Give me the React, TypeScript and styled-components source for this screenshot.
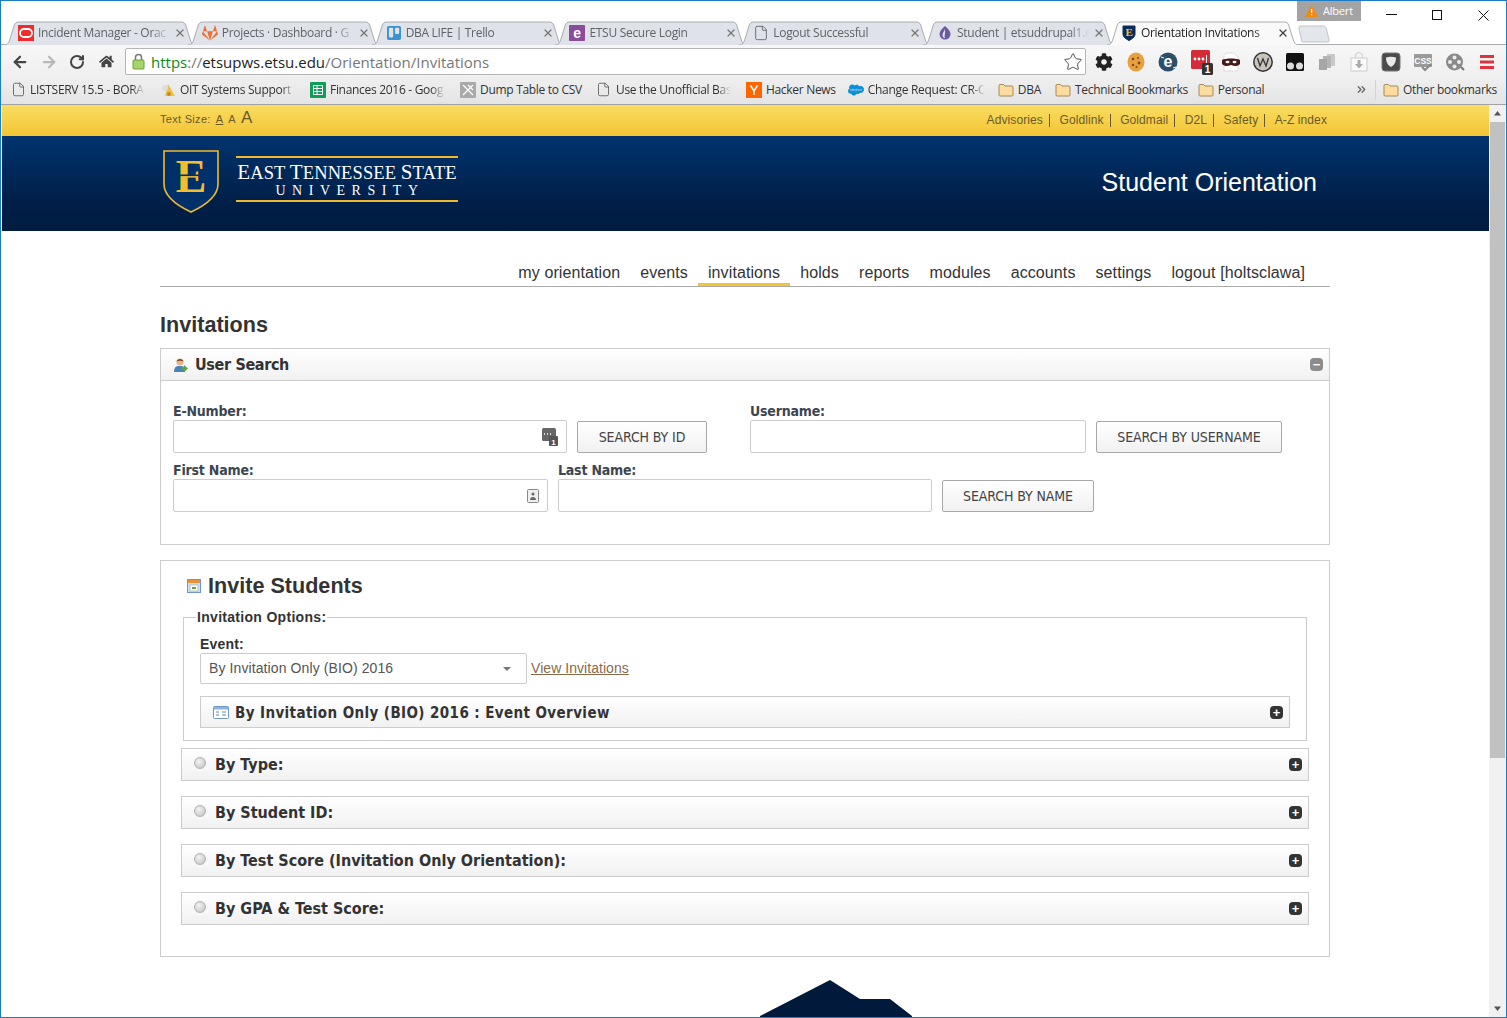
import React from "react";
import styled, { createGlobalStyle } from "styled-components";
import { ArrowLeft, ArrowRight, RotateCw, Star, X, File, ChevronsRight } from "lucide-react";
import { FaCog, FaGitlab, FaHome, FaSalesforce, FaTrello } from "react-icons/fa";

const Global = createGlobalStyle`
  html, body { margin: 0; padding: 0; width: 1507px; height: 1018px; overflow: hidden; background: #fff; }
  * { box-sizing: border-box; }
`;

const UI = `"Open Sans", "Noto Sans", sans-serif`;
const TAHOMA = `"DejaVu Sans Condensed", "DejaVu Sans", sans-serif`;
const ARIAL = `"Liberation Sans", Arial, sans-serif`;

const Window = styled.div`
  width: 1507px;
  height: 1018px;
  display: flex;
  flex-direction: column;
  overflow: hidden;
  background: #fff;
  border: 1px solid #1c7cc4;
`;

const TitleBar = styled.div`
  height: 43px;
  display: flex;
  justify-content: space-between;
  flex: none;
`;

const TabStrip = styled.div`
  display: flex;
  align-items: flex-end;
  padding-left: 3px;
  height: 44px;
  position: relative;
  z-index: 2;
`;

const TabWrap = styled.div<{ $active?: boolean }>`
  position: relative;
  width: 192px;
  height: 24px;
  margin-right: -8.2px;
  display: flex;
  align-items: center;
  padding: 0 3px 0 14px;
  font: 12px/16px ${UI};
  letter-spacing: -0.3px;
  color: ${(p) => (p.$active ? "#222" : "#5f6368")};
  z-index: ${(p) => (p.$active ? 3 : 1)};
`;

const TabShape = styled.svg`
  position: absolute;
  left: 0;
  top: 0;
`;

const TabIcon = styled.span`
  position: relative;
  width: 16px;
  height: 16px;
  display: flex;
  flex: none;
  align-items: center;
  justify-content: center;
  margin-right: 4px;
`;

const TabTitle = styled.span`
  position: relative;
  flex: 1;
  white-space: nowrap;
  overflow: hidden;
  mask-image: linear-gradient(to right, #000 85%, transparent 100%);
`;

const TabClose = styled.span<{ $active?: boolean }>`
  position: relative;
  display: flex;
  margin: 0 7px 0 4px;
  color: ${(p) => (p.$active ? "#444" : "#777")};
`;

const WinSide = styled.div`
  display: flex;
  flex-direction: column;
  width: 209px;
  margin-left: -2px;
`;

const WinTop = styled.div`
  display: flex;
  height: 20px;
`;

const ProfileBadge = styled.div`
  width: 65px;
  height: 20px;
  background: #a3a3a3;
  color: #fff;
  font: 11px/20px ${UI};
  letter-spacing: -0.2px;
  display: flex;
  align-items: center;
  gap: 5px;
  padding-left: 8px;
`;

const WinButtons = styled.div`
  display: flex;
  color: #111;
  margin-left: 7px;
`;

const WinButton = styled.span`
  width: 46px;
  height: 28px;
  display: flex;
  align-items: center;
  justify-content: center;
`;

const NewTab = styled.svg`
  display: block;
  margin-top: 4px;
  margin-left: 1px;
`;

const Toolbar = styled.div`
  height: 34px;
  flex: none;
  display: flex;
  align-items: center;
  padding-left: 10px;
  background: linear-gradient(#f7f7f7, #efefef);
  border-top: 1px solid #a9abae;
`;

const NavIcon = styled.span<{ $faded?: boolean; $inset?: number }>`
  width: 29px;
  display: flex;
  justify-content: flex-start;
  padding-left: ${(p) => p.$inset ?? 0}px;
  color: ${(p) => (p.$faded ? "#b8b8b8" : "#444")};
`;

const Omnibox = styled.div`
  width: 961px;
  height: 27px;
  margin-left: -2px;
  display: flex;
  align-items: center;
  background: #fff;
  border: 1px solid #b5b5b5;
  border-radius: 2px;
  padding: 0 2px 0 6px;
  font: 15px/20px ${UI};
`;

const Lock = styled.svg`
  margin-right: 6px;
  flex: none;
`;

const UrlScheme = styled.span`
  color: #0b8a1e;
`;
const UrlSep = styled.span`
  color: #777;
`;
const UrlHost = styled.span`
  color: #222;
`;
const UrlPath = styled.span`
  color: #777;
  flex: 1;
`;

const Extensions = styled.div`
  display: flex;
  align-items: center;
  margin-left: 2px;
`;

const Ext = styled.span<{ $w: number }>`
  width: ${(p) => p.$w}px;
  height: 24px;
  flex: none;
  display: flex;
  align-items: center;
  justify-content: center;
  color: #222;
`;

const Bookmarks = styled.div`
  height: 27px;
  flex: none;
  display: flex;
  align-items: center;
  padding: 0 9px 3px 9px;
  background: linear-gradient(#efefef, #e4e4e4);
  border-bottom: 1px solid #a3a3a3;
  font: 12px/16px ${UI};
  letter-spacing: -0.3px;
  color: #333;
`;

const Bookmark = styled.div<{ $gap?: number }>`
  display: flex;
  align-items: center;
  flex: none;
  margin-right: ${(p) => p.$gap ?? 13}px;
`;

const BmIcon = styled.span`
  width: 16px;
  height: 16px;
  margin-right: 4px;
  display: flex;
  align-items: center;
  justify-content: center;
  color: #555;
`;

const BmLabel = styled.span<{ $w?: number; $fade?: boolean }>`
  white-space: nowrap;
  ${(p) => (p.$w ? `width: ${p.$w}px;` : "")}
  ${(p) => (p.$fade ? "mask-image: linear-gradient(to right, #000 88%, transparent 100%);" : "")}
`;

const BmRight = styled.div`
  margin-left: auto;
  display: flex;
  align-items: center;
`;

const BmMore = styled.span`
  display: flex;
  color: #666;
  padding-right: 7px;
  margin-right: 7px;
  border-right: 1px solid #d4d4d4;
  height: 20px;
  align-items: center;
`;

const Viewport = styled.div`
  flex: 1;
  display: flex;
  min-height: 0;
  padding-left: 1px;
`;

const Main = styled.div`
  width: 1487px;
  overflow: hidden;
  flex: none;
`;

const Scrollbar = styled.div`
  width: 17px;
  flex: none;
  background: #f1f1f1;
  display: flex;
  flex-direction: column;
  align-items: center;
`;

const ScrollArrow = styled.svg`
  display: block;
  flex: none;
  margin: 5px 0;
`;

const ScrollThumb = styled.div`
  width: 15px;
  height: 636px;
  background: #c1c1c1;
  flex: none;
`;

const ScrollTrack = styled.div`
  flex: 1;
`;

const Wrap = styled.div`
  width: 1170px;
  margin-left: 158px;
`;

const UtilityBar = styled.div`
  height: 31px;
  background: linear-gradient(#f9dd62, #f3c433);
  color: #6a5a2a;
`;

const UtilityInner = styled(Wrap)`
  display: flex;
  justify-content: space-between;
  align-items: center;
  height: 31px;
  font: 11px/14px ${ARIAL};
`;

const TextSize = styled.div`
  display: flex;
  align-items: baseline;
  gap: 5px;
  margin-top: -5px;
  letter-spacing: 0.3px;
`;

const SizeLetter = styled.span<{ $size: number; $on?: boolean }>`
  font-size: ${(p) => p.$size}px;
  text-decoration: ${(p) => (p.$on ? "underline" : "none")};
`;

const UtilLinks = styled.div`
  display: flex;
  font-size: 12px;
  padding-right: 3px;
`;

const UtilLink = styled.span<{ $last?: boolean }>`
  padding: 0 ${(p) => (p.$last ? 0 : 6)}px 0 9.5px;
  border-right: ${(p) => (p.$last ? "none" : "1px solid #6a5a2a")};
  line-height: 13px;
  letter-spacing: 0.1px;
`;

const Banner = styled.div`
  height: 95px;
  background: linear-gradient(#00346f, #001f48 70%, #001c3f);
`;

const BannerInner = styled(Wrap)`
  display: flex;
  justify-content: space-between;
  align-items: center;
  height: 95px;
`;

const Logo = styled.div`
  display: flex;
  align-items: center;
  margin: 0 0 5px 1px;
`;

const Wordmark = styled.div`
  margin: 0 0 4px 15px;
  width: 222px;
  height: 46px;
  border-top: 2px solid #f0b92d;
  border-bottom: 2px solid #f0b92d;
  color: #fff;
  font-family: "Liberation Serif", serif;
  text-align: center;
`;

const WordTop = styled.div`
  font-size: 18.5px;
  line-height: 24px;
  margin-top: 2px;
  white-space: nowrap;
  letter-spacing: 0.1px;
`;

const WordCap = styled.span`
  font-size: 21px;
`;

const WordBottom = styled.div`
  font-size: 14px;
  line-height: 12px;
  letter-spacing: 6.5px;
  padding-left: 6px;
`;

const SiteTitle = styled.div`
  color: #fff;
  font: 25px/30px ${ARIAL};
  margin: 0 13px 3px 0;
`;

const Nav = styled.nav`
  height: 56px;
  border-bottom: 1px solid #aaa;
  display: flex;
  justify-content: flex-end;
  align-items: flex-end;
  padding-right: 15px;
`;

const NavItem = styled.a<{ $active?: boolean }>`
  font: 16px/18px ${ARIAL};
  letter-spacing: 0.1px;
  color: #333;
  padding: 3px 10px 1px;
  height: 25px;
  border-bottom: 3px solid ${(p) => (p.$active ? "#f3c433" : "transparent")};
  white-space: nowrap;
`;

const PageTitle = styled.h1`
  font: bold 21.6px/26px ${ARIAL};
  color: #333;
  margin: 25px 0 10px;
`;

const Panel = styled.section`
  width: 1170px;
  border: 1px solid #ccc;
  background: #fff;
`;

const PanelHead = styled.div`
  height: 32px;
  display: flex;
  align-items: center;
  padding: 0 6px 0 12px;
  background: linear-gradient(#fff, #f1f1f1);
  border-bottom: 1px solid #ccc;
`;

const HeadTitle = styled.h2`
  flex: 1;
  margin: 0 0 0 6px;
  padding-top: 1px;
  font: bold 16px/20px ${TAHOMA};
  color: #333;
  letter-spacing: -0.35px;
  white-space: nowrap;
`;

const SearchBody = styled.div`
  height: 163px;
  padding: 13px 12px 0;
`;

const FormRow = styled.div`
  display: flex;
  align-items: flex-end;
  gap: 10px;
  height: 59px;
`;

const Field = styled.div<{ $w: number; $skip?: number }>`
  width: ${(p) => p.$w}px;
  margin-left: ${(p) => p.$skip ?? 0}px;
  flex: none;
`;

const Label = styled.label`
  display: block;
  font: bold 14px/17px ${TAHOMA};
  letter-spacing: -0.2px;
  color: #3d4650;
`;

const InputBox = styled.div`
  height: 33px;
  display: flex;
  align-items: center;
  justify-content: flex-end;
  padding-right: 8px;
  border: 1px solid #ccc;
  border-radius: 2px;
  background: #fff;
`;

const Button = styled.button<{ $w: number }>`
  width: ${(p) => p.$w}px;
  height: 32px;
  flex: none;
  padding: 0;
  border: 1px solid #a8a8a8;
  border-radius: 2px;
  background: linear-gradient(#fff, #f1f1f1);
  font: 14px/18px ${TAHOMA};
  color: #444;
  letter-spacing: -0.1px;
`;

const InvitePanel = styled(Panel)`
  margin-top: 15px;
  height: 397px;
  padding: 0 20px;
`;

const InviteHead = styled.div`
  display: flex;
  align-items: center;
  height: 48px;
  padding: 1px 0 0 6px;
`;

const InviteTitle = styled.h2`
  margin: 0 0 0 7px;
  font: bold 21.6px/28px ${ARIAL};
  color: #333;
`;

const Options = styled.fieldset`
  margin: 0 2px;
  padding: 0 16px 11px;
  height: 132px;
  border: 1px solid #ccc;
`;

const OptionsLegend = styled.legend`
  padding: 0 1px;
  margin-left: -4px;
  font: bold 14px/16px ${ARIAL};
  letter-spacing: 0.3px;
  color: #333;
`;

const EventLabel = styled.label`
  display: block;
  margin-top: 10px;
  font: bold 14px/18px ${ARIAL};
  letter-spacing: 0.2px;
  color: #333;
`;

const EventRow = styled.div`
  display: flex;
  align-items: center;
  height: 31px;
  margin-bottom: 12px;
`;

const Select = styled.div`
  width: 327px;
  height: 31px;
  display: flex;
  align-items: center;
  justify-content: space-between;
  padding: 0 15px 2px 8px;
  border: 1px solid #ccc;
  border-radius: 2px;
  font: 14px/18px ${ARIAL};
  letter-spacing: 0.1px;
  color: #555;
`;

const Caret = styled.span`
  width: 0;
  height: 0;
  margin-top: 2px;
  border-left: 4px solid transparent;
  border-right: 4px solid transparent;
  border-top: 4px solid #777;
`;

const ViewLink = styled.a`
  margin: -2px 0 0 4px;
  font: 14px/18px ${ARIAL};
  letter-spacing: 0.05px;
  color: #8a6a4a;
  text-decoration: underline;
`;

const Bar = styled.div<{ $nested?: boolean }>`
  height: ${(p) => (p.$nested ? 32 : 33)}px;
  display: flex;
  align-items: center;
  padding: 0 6px 0 12px;
  border: 1px solid #ccc;
  background: linear-gradient(#fff, #f1f1f1);
  margin: ${(p) => (p.$nested ? "0" : "0 0 15px")};
`;

const BarList = styled.div`
  margin-top: 7px;
`;

const BarTitle = styled.span<{ $wide?: boolean }>`
  flex: 1;
  margin-left: ${(p) => (p.$wide ? 6 : 9)}px;
  padding-top: 1px;
  font: bold ${(p) => (p.$wide ? 15 : 16)}px/20px ${TAHOMA};
  letter-spacing: ${(p) => (p.$wide ? "0.4px" : "0")};
  color: #333;
  white-space: nowrap;
`;

const Dot = styled.span`
  width: 12px;
  height: 12px;
  border-radius: 50%;
  flex: none;
  background: radial-gradient(circle at 40% 35%, #f2f2f2, #bdbdbd);
  border: 1px solid #b3b3b3;
  margin: -3px 0 0 0;
`;

const RoundKey = styled.span<{ $muted?: boolean }>`
  width: 13px;
  height: 13px;
  border-radius: 4px;
  background: ${(p) => (p.$muted ? "#8c8c8c" : "#333")};
  flex: none;
  display: flex;
  align-items: center;
  justify-content: center;
  color: #fff;
  font: bold 13px/13px ${ARIAL};
`;

const Footer = styled.svg`
  display: block;
  margin: 22px 0 0 600px;
`;

// ---- little drawings

const FileIcon = ({ size = 15 }: { size?: number }) => <File size={size} strokeWidth={1.3} />;

const Folder = () => (
  <svg width="16" height="14" viewBox="0 0 16 14">
    <path d="M1 2.5A1 1 0 0 1 2 1.5h3.5l1.5 1.5h7a1 1 0 0 1 1 1v8a1 1 0 0 1-1 1H2a1 1 0 0 1-1-1z" fill="#fbdc9e" stroke="#a68a5a" />
  </svg>
);

const Shield = ({ size = 16 }: { size?: number }) => (
  <svg width={size} height={size} viewBox="0 0 16 16">
    <path d="M2 1h12v8c0 3-3 5-6 6.500C5 14 2 12 2 9z" fill="#0a2a58" stroke="#0a2a58" />
    <text x="8" y="11" textAnchor="middle" fontFamily="Liberation Serif" fontWeight="700" fontSize="11" fill="#f3c433">E</text>
  </svg>
);

const tabs: { title: string; icon: React.ReactNode; active?: boolean }[] = [
  {
    title: "Incident Manager - Orac",
    icon: (
      <svg width="16" height="16" viewBox="0 0 16 16">
        <rect width="16" height="16" fill="#f02b2b" />
        <rect x="2" y="4" width="12" height="8" rx="4" fill="none" stroke="#fff" strokeWidth="1.8" />
      </svg>
    ),
  },
  { title: "Projects · Dashboard · G", icon: <FaGitlab size={16} color="#e8703a" /> },
  {
    title: "DBA LIFE | Trello",
    icon: <FaTrello size={16} color="#3a93d0" />,
  },
  {
    title: "ETSU Secure Login",
    icon: (
      <svg width="16" height="16" viewBox="0 0 16 16">
        <rect width="16" height="16" rx="1" fill="#8a4b9b" />
        <text x="8" y="13" textAnchor="middle" fontFamily="Liberation Sans" fontWeight="700" fontSize="14" fill="#fff">e</text>
      </svg>
    ),
  },
  { title: "Logout Successful", icon: <FileIcon size={16} /> },
  {
    title: "Student | etsuddrupal1.e",
    icon: (
      <svg width="16" height="16" viewBox="0 0 16 16">
        <path d="M8 1c3 3 5.500 5 5.500 8A5.500 5.500 0 0 1 2.500 9C2.500 6 5 4 8 1z" fill="#6b5a9e" />
        <path d="M8 4c-1 3-2.500 3.500-2.500 6S7 13 8 13c-1-2 .5-4 0-9z" fill="#e6e3f0" />
      </svg>
    ),
  },
  { title: "Orientation Invitations", icon: <Shield />, active: true },
];

const Tab = ({ title, icon, active }: { title: string; icon: React.ReactNode; active?: boolean }) => (
  <TabWrap $active={active}>
    <TabShape width="192" height="24" viewBox="0 0 192 24">
      <path
        d="M0 24C4 24 5 21 6 18L10 5C11 2 12 1 15 1L177 1C180 1 181 2 182 5L186 18C187 21 188 24 192 24"
        fill={active ? "#f9f9f9" : "#dfe2e8"}
        stroke="#a9abae"
      />
    </TabShape>
    <TabIcon>{icon}</TabIcon>
    <TabTitle>{title}</TabTitle>
    <TabClose $active={active}>
      <X size={12} strokeWidth={2.6} />
    </TabClose>
  </TabWrap>
);

const Cookie = () => (
  <svg width="18" height="20" viewBox="0 0 18 20">
    <ellipse cx="9" cy="10" rx="8.500" ry="9.500" fill="#e9a03f" />
    <circle cx="6" cy="7" r="1.300" fill="#7a4a1a" />
    <circle cx="11" cy="6" r="1" fill="#7a4a1a" />
    <circle cx="12" cy="11" r="1.400" fill="#7a4a1a" />
    <circle cx="6" cy="13" r="1.200" fill="#7a4a1a" />
    <circle cx="9.500" cy="15" r="1" fill="#7a4a1a" />
  </svg>
);

const ECircle = () => (
  <svg width="20" height="20" viewBox="0 0 20 20">
    <circle cx="10" cy="10" r="9.500" fill="#2c4e68" />
    <path d="M3 5l3 1M15 16l3 -1" stroke="#fff" strokeWidth="1" />
    <text x="10" y="15" textAnchor="middle" fontFamily="Liberation Sans" fontWeight="700" fontSize="16" fill="#fff">e</text>
  </svg>
);

const LastPass = () => (
  <svg width="30" height="26" viewBox="0 0 30 26">
    <g transform="translate(6 0)">
      <rect x="1" y="1" width="19" height="19" rx="1.500" fill="#d52b38" />
      <circle cx="5" cy="10" r="1.400" fill="#fff" />
      <circle cx="9" cy="10" r="1.400" fill="#fff" />
      <circle cx="13" cy="10" r="1.400" fill="#fff" />
      <rect x="16" y="6" width="1" height="8" fill="#fff" />
      <rect x="12" y="14" width="11" height="12" rx="1.500" fill="#333" />
      <text x="17.500" y="24" textAnchor="middle" fontFamily="Liberation Sans" fontWeight="700" fontSize="10" fill="#fff">1</text>
    </g>
  </svg>
);

const Mask = () => (
  <svg width="20" height="20" viewBox="0 0 20 20">
    <path d="M5 1h8l4 4v14H3V3z" fill="#fff" stroke="#ddd" />
    <path d="M1 8c3-2 15-2 18 0v4c-3 3-6 2-9 1-3 1-6 2-9-1z" fill="#4a1a1a" />
    <ellipse cx="6.500" cy="10" rx="2" ry="1.200" fill="#fff" />
    <ellipse cx="13.500" cy="10" rx="2" ry="1.200" fill="#fff" />
  </svg>
);

const WCircle = () => (
  <svg width="20" height="20" viewBox="0 0 20 20">
    <circle cx="10" cy="10" r="9.200" fill="#c9c5bd" stroke="#333" strokeWidth="1.500" />
    <path d="M4.500 6l2.500 8 3-7 3 7 2.500-8" fill="none" stroke="#333" strokeWidth="1.300" />
  </svg>
);

const Glasses = () => (
  <svg width="20" height="20" viewBox="0 0 20 20">
    <rect x="1" y="1" width="18" height="18" rx="1.500" fill="#111" />
    <circle cx="5.500" cy="14" r="3.500" fill="#ddd" />
    <circle cx="14.500" cy="14" r="3.500" fill="#ddd" />
  </svg>
);

const Copies = () => (
  <svg width="18" height="18" viewBox="0 0 18 18">
    <rect x="9" y="1" width="8" height="12" fill="#c8c8c8" />
    <rect x="5" y="3" width="8" height="12" fill="#b4b4b4" />
    <rect x="1" y="6" width="8" height="11" fill="#a6a6a6" />
  </svg>
);

const Bag = () => (
  <svg width="20" height="20" viewBox="0 0 20 20">
    <path d="M2 6h16v13H2z" fill="#fafafa" stroke="#ccc" />
    <path d="M6.500 6V4a3.500 3.500 0 0 1 7 0v2" fill="none" stroke="#ccc" />
    <path d="M8.500 8h3v4h2.500L10 16.500 6 12h2.500z" fill="#aaa" />
  </svg>
);

const Ghostery = () => (
  <svg width="20" height="20" viewBox="0 0 20 20">
    <rect x="1" y="1" width="18" height="18" rx="3" fill="#4a4a4a" stroke="#777" />
    <path d="M5 5.500c3-1 7-1 10 0 0 5-2 8-5 9.500-3-1.500-5-4.500-5-9.500z" fill="#e8e8e8" />
  </svg>
);

const CssBadge = () => (
  <svg width="20" height="20" viewBox="0 0 20 20">
    <rect x="1" y="2" width="18" height="13" rx="1" fill="#9a9a9a" />
    <text x="10" y="12" textAnchor="middle" fontFamily="Liberation Sans" fontWeight="700" fontSize="8.500" fill="#fff">CSS</text>
    <path d="M9 15l3 3 6-6" fill="none" stroke="#8a8a8a" strokeWidth="2" />
  </svg>
);

const Reel = () => (
  <svg width="20" height="20" viewBox="0 0 20 20">
    <circle cx="9.500" cy="10" r="8.500" fill="#8a8a8a" />
    <circle cx="9.500" cy="5.500" r="2" fill="#eee" />
    <circle cx="9.500" cy="14.500" r="2" fill="#eee" />
    <circle cx="5" cy="10" r="2" fill="#eee" />
    <circle cx="14" cy="10" r="2" fill="#eee" />
    <path d="M16 15l3 3" stroke="#777" strokeWidth="2" />
  </svg>
);

const Hamburger = () => (
  <svg width="14" height="14" viewBox="0 0 14 14">
    <rect y="0" width="14" height="3" fill="#e0343c" />
    <rect y="5.500" width="14" height="3" fill="#e0343c" />
    <rect y="11" width="14" height="3" fill="#e0343c" />
  </svg>
);

const UserGo = () => (
  <svg width="16" height="16" viewBox="0 0 16 16">
    <path d="M1 15c0-4 1.500-6 4-6h4c2 0 3 2 3 6z" fill="#4a83b8" />
    <circle cx="7" cy="5" r="3.500" fill="#e8b48c" />
    <path d="M3.500 4.500C4 1 10 1 10.500 4.500 8 3.500 6 3.500 3.500 4.500z" fill="#8a4a2a" />
    <path d="M8 10h3V8l4 3.500L11 15v-2H8z" fill="#58a83c" />
  </svg>
);

const Calendar = () => (
  <svg width="14" height="14" viewBox="0 0 14 14">
    <rect x=".5" y=".5" width="13" height="13" fill="#cfe0f5" stroke="#6f97cc" />
    <rect x="1" y="1" width="12" height="3" fill="#e8913a" />
    <rect x="3" y="6" width="8" height="6" fill="#fff" stroke="#8fae8a" strokeWidth=".6" />
    <rect x="5" y="8" width="4" height="2" fill="#6aa04a" />
  </svg>
);

const TableIcon = () => (
  <svg width="16" height="13" viewBox="0 0 16 13">
    <rect x=".5" y=".5" width="15" height="12" rx="1" fill="#fff" stroke="#6f97cc" />
    <rect x="1" y="1" width="14" height="2.500" fill="#8fb2de" />
    <path d="M3 6h3M3 9h3M9 6h4M9 9h4" stroke="#5a86c0" />
  </svg>
);

const bookmarks: { label: string; icon: React.ReactNode; w?: number; gap?: number }[] = [
  { label: "LISTSERV 15.5 - BORA", icon: <FileIcon />, w: 115, gap: 15 },
  {
    label: "OIT Systems Support V",
    w: 115,
    gap: 15,
    icon: (
      <svg width="16" height="16" viewBox="0 0 16 16">
        <path d="M8 2L15 14H5z" fill="#f0c040" />
        <circle cx="5" cy="6" r="3" fill="#ddd" />
        <circle cx="9" cy="12" r="2" fill="#c68a30" />
      </svg>
    ),
  },
  {
    label: "Finances 2016 - Goog",
    w: 115,
    gap: 15,
    icon: (
      <svg width="16" height="16" viewBox="0 0 16 16">
        <rect width="16" height="16" rx="1" fill="#0f9d58" />
        <path d="M3.500 3.500h9v9h-9zM3.500 6.500h9M3.500 9.500h9M7 3.500v9" fill="none" stroke="#fff" />
      </svg>
    ),
  },
  {
    label: "Dump Table to CSV",
    gap: 14,
    icon: (
      <svg width="16" height="16" viewBox="0 0 16 16">
        <rect width="16" height="16" rx="1" fill="#a9a9a9" />
        <path d="M3 3l10 10M13 3L3 13M8 3l5 5" stroke="#fff" strokeWidth="1.300" />
      </svg>
    ),
  },
  { label: "Use the Unofficial Bas", icon: <FileIcon />, w: 115, gap: 15 },
  {
    label: "Hacker News",
    gap: 12,
    icon: (
      <svg width="16" height="16" viewBox="0 0 16 16">
        <rect width="16" height="16" fill="#ff6600" />
        <path d="M4.500 3.500L8 9l3.500-5.500M8 9v4" fill="none" stroke="#fff" strokeWidth="1.500" />
      </svg>
    ),
  },
  { label: "Change Request: CR-C", icon: <FaSalesforce size={16} color="#0d8fd8" />, w: 117, gap: 13 },
  { label: "DBA", icon: <Folder />, gap: 14 },
  { label: "Technical Bookmarks", icon: <Folder />, gap: 10 },
  { label: "Personal", icon: <Folder /> },
];

const barTitles = ["By Type:", "By Student ID:", "By Test Score (Invitation Only Orientation):", "By GPA & Test Score:"];

const navItems = ["my orientation", "events", "invitations", "holds", "reports", "modules", "accounts", "settings", "logout [holtsclawa]"];

const utilLinks = ["Advisories", "Goldlink", "Goldmail", "D2L", "Safety", "A-Z index"];

const App = () => (
  <>
    <Global />
    <Window>
      <TitleBar>
        <TabStrip>
          {tabs.map((t) => (
            <Tab key={t.title} {...t} />
          ))}
        </TabStrip>
        <WinSide>
          <WinTop>
            <ProfileBadge>
              <svg width="13" height="12" viewBox="0 0 13 12">
                <path d="M6.500 0L13 12H0z" fill="#f08a10" />
                <rect x="6" y="4" width="1.200" height="4" fill="#fff" />
                <rect x="6" y="9" width="1.200" height="1.300" fill="#fff" />
              </svg>
              Albert
            </ProfileBadge>
            <WinButtons>
              <WinButton>
                <svg width="11" height="2" viewBox="0 0 11 2">
                  <rect width="11" height="1" fill="#111" />
                </svg>
              </WinButton>
              <WinButton>
                <svg width="10" height="10" viewBox="0 0 10 10">
                  <rect x=".5" y=".5" width="9" height="9" fill="none" stroke="#111" />
                </svg>
              </WinButton>
              <WinButton>
                <svg width="11" height="11" viewBox="0 0 11 11">
                  <path d="M.5 .5l10 10M10.500 .5l-10 10" stroke="#111" strokeWidth="1" />
                </svg>
              </WinButton>
            </WinButtons>
          </WinTop>
          <NewTab width="32" height="18" viewBox="0 0 32 18">
            <path d="M4 17L1 4C.5 2 1 1 3 1H25C27 1 28 2 28.500 4L31 15C31.500 17 30 17 29 17z" fill="#e3e6eb" stroke="#c2c5ca" />
          </NewTab>
        </WinSide>
      </TitleBar>

      <Toolbar>
        <NavIcon>
          <ArrowLeft size={18} strokeWidth={3} />
        </NavIcon>
        <NavIcon $faded>
          <ArrowRight size={18} strokeWidth={3} />
        </NavIcon>
        <NavIcon>
          <RotateCw size={16} strokeWidth={3} />
        </NavIcon>
        <NavIcon $inset={1}>
          <FaHome size={15} />
        </NavIcon>
        <Omnibox>
          <Lock width="13" height="17" viewBox="0 0 13 17">
            <path d="M3.500 7V4.500a3 3 0 0 1 6 0V7" fill="none" stroke="#777" strokeWidth="1.500" />
            <rect x="1" y="7" width="11" height="9" rx="1" fill="#a6d66a" stroke="#6f9c3a" />
          </Lock>
          <UrlScheme>https</UrlScheme>
          <UrlSep>://</UrlSep>
          <UrlHost>etsupws.etsu.edu</UrlHost>
          <UrlPath>/Orientation/Invitations</UrlPath>
          <Star size={20} strokeWidth={1.2} color="#555" />
        </Omnibox>
        <Extensions>
          <Ext $w={32}><FaCog size={18} /></Ext>
          <Ext $w={32}><Cookie /></Ext>
          <Ext $w={31}><ECircle /></Ext>
          <Ext $w={32}><LastPass /></Ext>
          <Ext $w={32}><Mask /></Ext>
          <Ext $w={32}><WCircle /></Ext>
          <Ext $w={32}><Glasses /></Ext>
          <Ext $w={32}><Copies /></Ext>
          <Ext $w={32}><Bag /></Ext>
          <Ext $w={32}><Ghostery /></Ext>
          <Ext $w={32}><CssBadge /></Ext>
          <Ext $w={32}><Reel /></Ext>
          <Ext $w={32}><Hamburger /></Ext>
        </Extensions>
      </Toolbar>

      <Bookmarks>
        {bookmarks.map((b) => (
          <Bookmark key={b.label} $gap={b.gap}>
            <BmIcon>{b.icon}</BmIcon>
            <BmLabel $w={b.w} $fade={!!b.w}>
              {b.label}
            </BmLabel>
          </Bookmark>
        ))}
        <BmRight>
          <BmMore>
            <ChevronsRight size={13} strokeWidth={2.4} />
          </BmMore>
          <Bookmark $gap={0}>
            <BmIcon>
              <Folder />
            </BmIcon>
            <BmLabel>Other bookmarks</BmLabel>
          </Bookmark>
        </BmRight>
      </Bookmarks>

      <Viewport>
        <Main>
          <UtilityBar>
            <UtilityInner>
              <TextSize>
                Text Size:
                <SizeLetter $size={11} $on>A</SizeLetter>
                <SizeLetter $size={11}>A</SizeLetter>
                <SizeLetter $size={17}>A</SizeLetter>
              </TextSize>
              <UtilLinks>
                {utilLinks.map((l, i) => (
                  <UtilLink key={l} $last={i === utilLinks.length - 1}>
                    {l}
                  </UtilLink>
                ))}
              </UtilLinks>
            </UtilityInner>
          </UtilityBar>

          <Banner>
            <BannerInner>
              <Logo>
                <svg width="60" height="68" viewBox="0 0 60 68">
                  <path d="M2 3h56v34c0 13-13 22-28 29C15 59 2 50 2 37z" fill="#00306a" stroke="#0a2a58" strokeWidth="1" />
                  <path d="M3 4h54v33c0 12-12 21-27 28C15 58 3 49 3 37z" fill="#00306a" stroke="#f0b92d" strokeWidth="1.600" />
                  <text x="30" y="45" textAnchor="middle" fontFamily="Liberation Serif" fontWeight="700" fontSize="46" fill="#f4bd2f">E</text>
                  <rect x="14" y="27.500" width="32" height="1.600" fill="#00306a" />
                </svg>
                <Wordmark>
                  <WordTop>
                    <WordCap>E</WordCap>AST <WordCap>T</WordCap>ENNESSEE <WordCap>S</WordCap>TATE
                  </WordTop>
                  <WordBottom>UNIVERSITY</WordBottom>
                </Wordmark>
              </Logo>
              <SiteTitle>Student Orientation</SiteTitle>
            </BannerInner>
          </Banner>

          <Wrap>
            <Nav>
              {navItems.map((n) => (
                <NavItem key={n} $active={n === "invitations"}>
                  {n}
                </NavItem>
              ))}
            </Nav>

            <PageTitle>Invitations</PageTitle>

            <Panel>
              <PanelHead>
                <UserGo />
                <HeadTitle>User Search</HeadTitle>
                <RoundKey $muted>−</RoundKey>
              </PanelHead>
              <SearchBody>
                <FormRow>
                  <Field $w={394}>
                    <Label>E-Number:</Label>
                    <InputBox>
                      <svg width="16" height="18" viewBox="0 0 16 18">
                        <rect y="0" width="14" height="13" rx="1.500" fill="#666" />
                        <path d="M2 6h1M5 6h1M8 6h1" stroke="#fff" strokeWidth="1.500" />
                        <rect x="7" y="8" width="9" height="10" rx="1" fill="#555" />
                        <text x="11.500" y="16.500" textAnchor="middle" fontFamily="Liberation Sans" fontWeight="700" fontSize="8" fill="#fff">1</text>
                      </svg>
                    </InputBox>
                  </Field>
                  <Button $w={130}>SEARCH BY ID</Button>
                  <Field $w={336} $skip={33}>
                    <Label>Username:</Label>
                    <InputBox />
                  </Field>
                  <Button $w={186}>SEARCH BY USERNAME</Button>
                </FormRow>
                <FormRow>
                  <Field $w={375}>
                    <Label>First Name:</Label>
                    <InputBox>
                      <svg width="12" height="14" viewBox="0 0 12 14">
                        <rect x=".5" y=".5" width="11" height="13" rx="1" fill="#eee" stroke="#888" />
                        <circle cx="6" cy="5" r="1.500" fill="#666" />
                        <path d="M3 11c0-4 6-4 6 0z" fill="#666" />
                      </svg>
                    </InputBox>
                  </Field>
                  <Field $w={374}>
                    <Label>Last Name:</Label>
                    <InputBox />
                  </Field>
                  <Button $w={152}>SEARCH BY NAME</Button>
                </FormRow>
              </SearchBody>
            </Panel>

            <InvitePanel>
              <InviteHead>
                <Calendar />
                <InviteTitle>Invite Students</InviteTitle>
              </InviteHead>
              <Options>
                <OptionsLegend>Invitation Options:</OptionsLegend>
                <EventLabel>Event:</EventLabel>
                <EventRow>
                  <Select>
                    By Invitation Only (BIO) 2016
                    <Caret />
                  </Select>
                  <ViewLink>View Invitations</ViewLink>
                </EventRow>
                <Bar $nested>
                  <TableIcon />
                  <BarTitle $wide>By Invitation Only (BIO) 2016 : Event Overview</BarTitle>
                  <RoundKey>+</RoundKey>
                </Bar>
              </Options>
              <BarList>
                {barTitles.map((t) => (
                  <Bar key={t}>
                    <Dot />
                    <BarTitle>{t}</BarTitle>
                    <RoundKey>+</RoundKey>
                  </Bar>
                ))}
              </BarList>
            </InvitePanel>

            <Footer width="152" height="60" viewBox="0 0 152 60">
              <path d="M0 37L70 1L100 20H130L152 37V60H0z" fill="#01193a" />
            </Footer>
          </Wrap>
        </Main>
        <Scrollbar>
          <ScrollArrow width="9" height="7" viewBox="0 0 9 7">
            <path d="M4.500 1L8 5.500H1z" fill="#555" />
          </ScrollArrow>
          <ScrollThumb />
          <ScrollTrack />
          <ScrollArrow width="9" height="7" viewBox="0 0 9 7">
            <path d="M4.500 6L8 1.500H1z" fill="#555" />
          </ScrollArrow>
        </Scrollbar>
      </Viewport>
    </Window>
  </>
);

export default App;
